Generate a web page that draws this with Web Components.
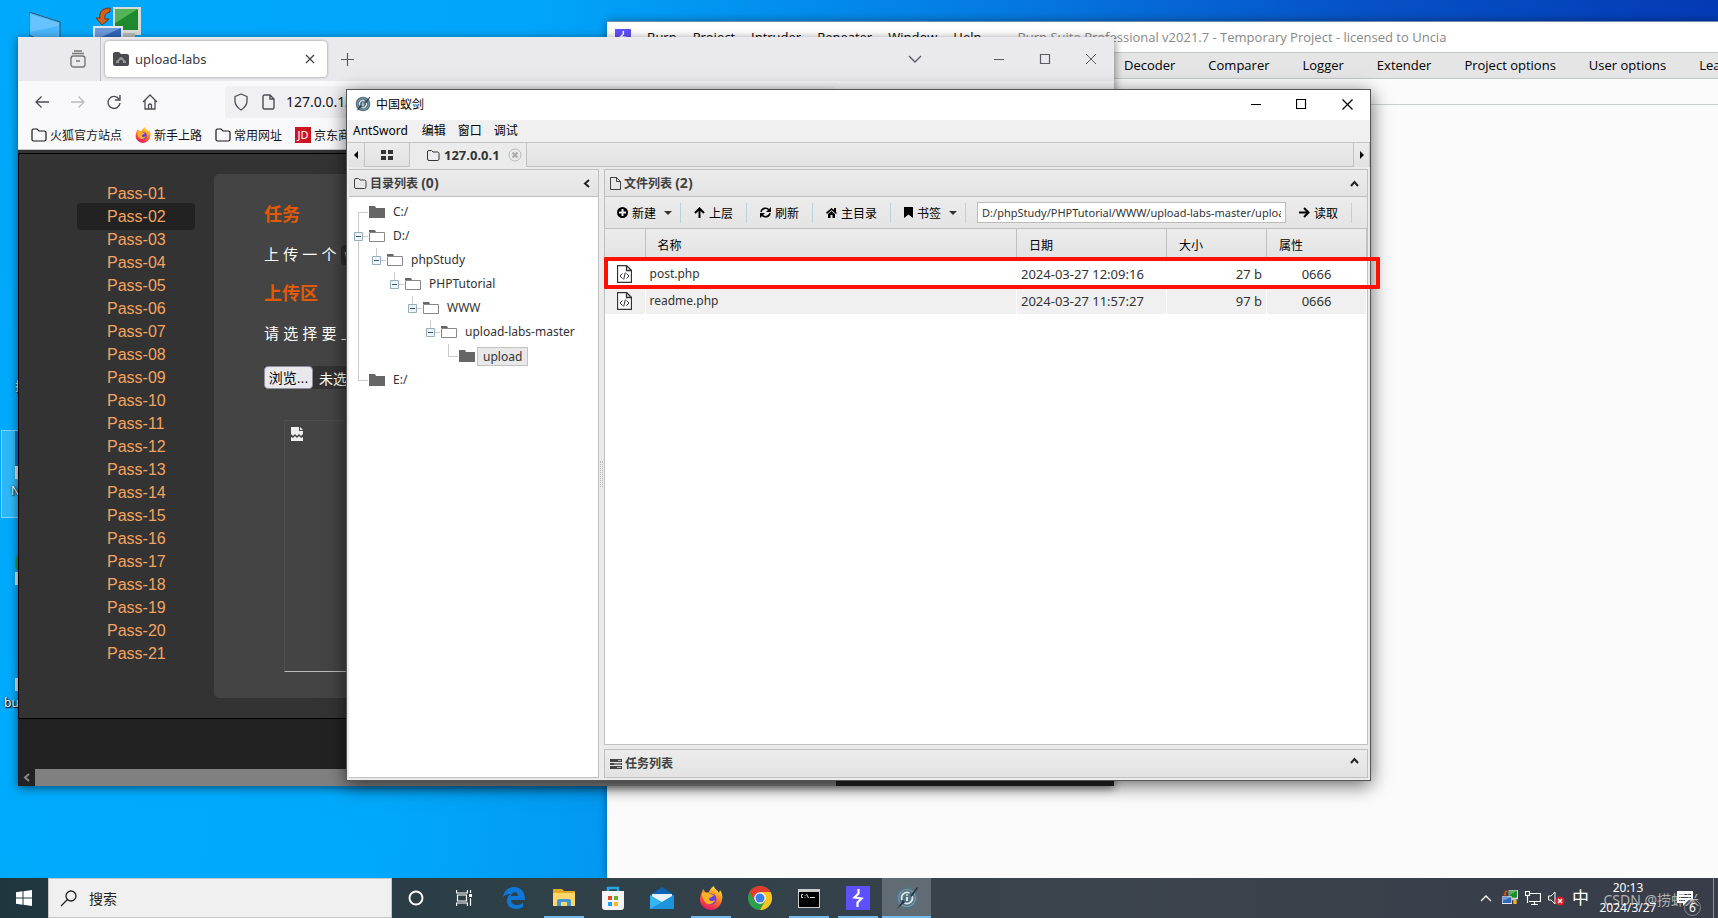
<!DOCTYPE html>
<html lang="zh-CN">
<head>
<meta charset="utf-8">
<title>桌面</title>
<style>
html,body{margin:0;height:100%;overflow:hidden}
body{font-family:"Noto Sans","Noto Sans CJK SC",sans-serif;font-size:12px;color:#000}
</style>
</head>
<body>
<desk-top>
  <desk-icons slot="icons"></desk-icons>
  <burp-window slot="windows"></burp-window>
  <browser-window slot="windows"><labs-page></labs-page></browser-window>
  <sword-window slot="windows"><dir-tree slot="side"></dir-tree><file-grid slot="main"></file-grid></sword-window>
  <task-bar slot="bar"></task-bar>
</desk-top>
<script>
const base = `:host,*{box-sizing:border-box}button{font:inherit;color:inherit;background:none;border:0;padding:0;margin:0}svg{display:block;flex:none}a{color:inherit;text-decoration:none}`;
function define(name, css, html) {
  const t = document.createElement('template');
  t.innerHTML = `<style>${base}${css}</style>${html}`;
  customElements.define(name, class extends HTMLElement {
    constructor() { super(); this.attachShadow({ mode: 'open' }).append(t.content.cloneNode(true)); }
  });
}
const svg = (w, h, body, attrs = '') => `<svg width="${w}" height="${h}" viewBox="0 0 ${w} ${h}" ${attrs}>${body}</svg>`;
const line = 'fill="none" stroke="currentColor"';

const foxLogo = s => `<svg width="${s}" height="${s}" viewBox="0 0 24 24"><defs><linearGradient id="fx" x1=".8" y1="0" x2=".3" y2="1"><stop offset="0" stop-color="#fff44f"/><stop offset=".35" stop-color="#ff9a1f"/><stop offset=".7" stop-color="#ff4a3c"/><stop offset="1" stop-color="#e0156c"/></linearGradient></defs><path fill="url(#fx)" d="M3 6l1-3 3 4 3-1c1-3 3-5 5-6 0 3 4 4 5 7l1-3c2 3 3 6 2 10-1 6-6 10-11 10S1 20 1 14c0-3 .6-6 2-8z"/><circle cx="12" cy="13" r="5.5" fill="#6b3ee0"/><path fill="#ffb224" d="M3 7c3-1 7 0 8 1l4 1c-1 2-4 2-5 4 0 2 3 3 6 1-1 4-7 6-10 2-2-2-3-5-3-9z"/></svg>`;
const swordLogo = s => `<svg width="${s}" height="${s}" viewBox="0 0 24 24"><circle cx="12" cy="12" r="11" fill="#567383"/><circle cx="12" cy="12" r="8.5" fill="none" stroke="#7d99a7" stroke-width="1.2"/><path d="M14.500 7A5.500 5.500 0 0 0 7 14M9.500 17A5.500 5.500 0 0 0 17 10" fill="none" stroke="#dfe9ee" stroke-width="1.800"/><path d="M12 11v4M12 8.500v1.200" stroke="#eef4f7" stroke-width="1.800"/><path d="M2 23l6-9 2 2zM15.500 9.500L22 1l1 1-6.500 9z" fill="#27353d"/></svg>`;
const burpLogo = s => `<svg width="${s}" height="${s}" viewBox="0 0 24 24"><path d="M0 0h24v24H0z" fill="#5f50ff"/><path d="M12.500 3v4.500L8.500 11.500l7 1-4 4V21" fill="none" stroke="#fff" stroke-width="2.200"/></svg>`;
const twoScreens = (w) => `<svg width="${w}" height="${w}" viewBox="0 0 48 48"><path d="M20 0h28v28H20z" fill="#d8dcd8"/><path d="M22 2h23v21H22z" fill="#1e8a2e"/><path d="M22 2h23L22 16z" fill="#55b35a"/><path d="M30 26h12v5H30z" fill="#b9bdb9"/><path d="M0 19h30v23H0z" fill="#e3e8ee"/><path d="M2 21h26v18H2z" fill="#2f66b8"/><path d="M2 21h26L2 33z" fill="#6d9add"/><path d="M17 1c-8 0-11 4-10 10H3l6 7 7-6h-4c-1-4 1-6 5-7z" fill="#d0621c" stroke="#7c3208"/><path d="M34 30h10v12H34z" fill="#f0b030"/></svg>`;

define('desk-top', `
:host{display:flex;flex-direction:column;height:100vh;position:relative;overflow:hidden}
.area{flex:1;position:relative;min-height:0;overflow:hidden;background:linear-gradient(#00000000,#00b4ff33),linear-gradient(100deg,#00a9fb 0,#00a6fa 28%,#0292ee 40%,#0577de 55%,#0653c6 72%,#043ab4 92%)}
`, `<div class="area"><slot name="icons"></slot><slot name="windows"></slot></div><slot name="bar"></slot>`);

define('desk-icons', `
:host{position:absolute;inset:0;color:#fff;font-size:12px;text-shadow:1px 1px 1px #000,0 0 2px #000}
.i{position:absolute}.sel{left:1px;top:430px;width:60px;height:88px;background:#2eb8f8;border:1px solid #7fd2fb}
.sel i{position:absolute;left:13px;top:0;width:20px;height:36px;background:#0e72c8}
.doc{left:15px;width:10px;height:13px;background:#dfe6ea}
`, `<div class="i" style="left:29px;top:12px">${svg(32, 28, '<path d="M0 0l31 10v28L0 23z" fill="#4ab6fb" stroke="#38526b"/><path d="M1 2l29 9v3L1 20z" fill="#7ccbff" opacity=".6"/>')}</div>
<div class="i" style="left:93px;top:7px">${twoScreens(48)}</div>
<div class="i" style="left:15px;top:377px">控</div>
<div class="i sel"><i></i></div><div class="i doc" style="top:466px"></div><div class="i" style="left:11px;top:482px">N</div>
<div class="i" style="left:15px;top:548px;width:30px;height:30px;border-radius:50%;background:#2e9a4c"></div><div class="i doc" style="top:572px"></div>
<div class="i doc" style="top:678px"></div><div class="i" style="left:4px;top:694px">bu</div>`);

define('burp-window', `
:host{position:absolute;left:607px;top:21px;right:0;bottom:0;background:#fbfbfb;border-top:1px solid #6d8bb0;box-shadow:0 0 8px #0006;font-family:"Open Sans","Noto Sans",sans-serif;font-size:13px}
header{height:30px;background:#fff;display:flex;align-items:center;padding-left:8px;white-space:nowrap;overflow:hidden}
header svg{margin-right:8px}
nav.m{display:flex}nav.m button{padding:0 8px;font-size:13px}
h1{font:inherit;color:#888;margin:0 0 0 28px;font-size:13px}
nav.t{height:27px;background:#e5e5e5;border:1px solid #c3c9c9;border-width:1px 0;display:flex;padding-left:501px;overflow:hidden;white-space:nowrap}
nav.t button{padding:0 17px 2px 16px;flex:none}
hr{border:0;border-top:1px solid #c9d0d0;margin:25px 0 0}
`, `<header>${burpLogo(16)}<nav class="m"><button>Burp</button><button>Project</button><button>Intruder</button><button>Repeater</button><button>Window</button><button>Help</button></nav><h1>Burp Suite Professional v2021.7 - Temporary Project - licensed to Uncia</h1></header>
<nav class="t"><button>Decoder</button><button>Comparer</button><button>Logger</button><button>Extender</button><button>Project options</button><button>User options</button><button>Learn</button></nav><hr>`);

const fold = svg(16, 14, `<path d="M1 11.500V2.500Q1 1 2.500 1H6l2 2h5.500Q15 3 15 4.500v7Q15 13 13.500 13h-11Q1 13 1 11.500z" ${line} stroke-width="1.200"/>`);
define('browser-window', `
:host{position:absolute;left:18px;top:37px;width:1096px;height:749px;display:flex;flex-direction:column;background:#f9f9fb;box-shadow:0 2px 9px #0008;color:#15141a}
.tabs{height:44px;background:#eaeaee;display:flex;align-items:center;color:#5b5b66}
.view{width:83px;height:44px;border-right:1px solid #bdbdc4;display:flex;justify-content:flex-end;align-items:center;padding-right:14px;color:#777}
.tab{width:222px;height:36px;margin-left:4px;background:#fff;border-radius:4px;box-shadow:0 0 3px #0006;display:flex;align-items:center;padding:0 12px 0 8px;color:#3a3944;font-size:13px}
.tab span{flex:1;margin-left:6px}
.new{margin-left:14px}
.ctl{margin-left:auto;display:flex;align-items:center;padding-right:17px}
.nav{height:37px;display:flex;align-items:center;padding-top:4px;padding-left:16px;color:#4d4c57}
.nav button{width:18px;margin-right:18px}
.url{margin-left:47px;width:610px;height:32px;background:#f0f0f4;border-radius:4px;display:flex;align-items:center;padding-left:8px}
.url input{border:0;background:none;font:14px "Noto Sans",sans-serif;margin-left:11px;flex:1;padding:0;color:#15141a}
.ext{margin-left:211px;width:20px;height:20px;background:#1f9a2a;border-radius:2px}
.marks{height:32px;border-bottom:1px solid #c4c4ca;display:flex;align-items:center;padding:2px 0 0 13px;white-space:nowrap;font-size:12px}
.marks a{display:flex;align-items:center;gap:3px;margin-right:13px}
.jd{width:16px;height:16px;background:#cf1421;color:#fff;font-size:11px;line-height:16px;text-align:center}
`, `<div class="tabs"><div class="view">${svg(16, 18, `<rect x="1" y="6" width="14" height="11" rx="2.500" ${line} stroke-width="1.400"/><path d="M2 3.500h12M4 1h8M6 11h4" ${line} stroke-width="1.400"/>`)}</div>
<div class="tab">${svg(16, 14, '<path d="M0 2q0-2 2-2h4l2 2h6q2 0 2 2v8q0 2-2 2H2q-2 0-2-2z" fill="#4a4b50"/><path d="M3 11q0-3 2-3 1-3 3-3t3 3q2 0 2 3h-3V9L8 7.500 6 9v2z" fill="#97989b"/>')}<span>upload-labs</span><button aria-label="关闭标签">${svg(10, 10, `<path d="M1 1l8 8M9 1L1 9" ${line} stroke-width="1.100"/>`)}</button></div>
<button class="new" aria-label="新标签">${svg(13, 13, `<path d="M6.500 0v13M0 6.500h13" ${line} stroke-width="1.200"/>`)}</button>
<div class="ctl">${svg(14, 8, `<path d="M1 1l6 6 6-6" ${line} stroke-width="1.400"/>`)}<span style="width:71px"></span>${svg(12, 12, `<path d="M1 6.500h10" ${line}/>`)}<span style="width:34px"></span>${svg(12, 12, `<path d="M1.500 1.500h9v9h-9z" ${line} stroke-width="1.200"/>`)}<span style="width:34px"></span>${svg(12, 12, `<path d="M1 1l10 10M11 1L1 11" ${line}/>`)}</div></div>
<div class="nav"><button aria-label="后退">${svg(16, 16, `<path d="M15 8H2M7.500 2.500L2 8l5.500 5.500" ${line} stroke-width="1.300"/>`)}</button><button aria-label="前进" style="color:#bbb">${svg(16, 16, `<path d="M1 8h13M8.500 2.500L14 8l-5.500 5.500" ${line} stroke-width="1.300"/>`)}</button><button aria-label="刷新">${svg(16, 16, `<path d="M13 5A6 6 0 1 0 14 9M14 1v5H9" ${line} stroke-width="1.400"/>`)}</button><button aria-label="主页">${svg(16, 16, `<path d="M1 8l7-7 7 7M3 6.500V15h10V6.500M6.500 15v-4q1.500-2 3 0v4" ${line} stroke-width="1.300"/>`)}</button>
<div class="url">${svg(16, 18, `<path d="M8 1l6 2.500V8q0 5-6 9-6-4-6-9V3.500z" ${line} stroke-width="1.300" stroke-linejoin="round"/>`)}<span style="width:13px"></span>${svg(13, 16, `<path d="M1 13.500V2.500Q1 1 2.500 1H8l4 4v8.500Q12 15 10.500 15h-8Q1 15 1 13.500zM8 1v4h4" ${line} stroke-width="1.400"/>`)}<input aria-label="地址" value="127.0.0.1/upload-labs-master/Pass-02/index.php"></div><i class="ext"></i></div>
<div class="marks"><a href="#">${fold}火狐官方站点</a><a href="#">${foxLogo(16)}新手上路</a><a href="#">${fold}常用网址</a><a href="#"><span class="jd">JD</span>京东商城</a></div>
<slot></slot>`);

const passes = Array.from({ length: 21 }, (_, i) => `<li${i === 1 ? ' class="on"' : ''}><a href="#">Pass-${String(i + 1).padStart(2, '0')}</a></li>`).join('');
define('labs-page', `
:host{flex:1;display:flex;flex-direction:column;background:linear-gradient(#333 3px,#222 3px);font-family:"Liberation Sans","Noto Sans CJK SC",sans-serif;color:#fff;overflow:hidden}
.body{margin-top:3px;border:1px solid #000;background:#333;display:flex;height:566px;padding:20px 0;align-items:flex-start}
ul{list-style:none;margin:8px 0 0 58px;padding:0;width:118px;font-size:16px;line-height:23px;color:#f4a460}
li{height:23px;padding-left:30px}
li.on{background:#222;border-radius:4px;height:27px;line-height:23px;margin:-2px 0;padding-top:2px}
main{margin-left:19px;flex:1;height:524px;background:#444;border-radius:5px 0 0 5px;padding:28px 50px}
h3{font-size:18px;line-height:26px;margin:0;color:#e35a04}
p{margin:15px 0 14px;font-size:15px;line-height:24px}
p code{background:#2c2c2c;border-radius:4px;padding:2px 4px;color:#b5cf3a;font-size:14px}
.f{display:flex;align-items:center;background:#333;width:400px;height:23px;margin-top:20px;font-size:14px;gap:6px}
.f button{background:#e9e9ed;border:1px solid #8f8f9d;border-radius:4px;color:#000;width:49px;height:23px;line-height:20px}
.img{margin:31px 0 0 20px;height:252px;border:1px solid #4d4d4d;border-bottom-color:#bbb;padding:6px}
.bar{margin-top:auto;height:17px;display:flex;background:#222}
.bar span{width:17px;display:flex;align-items:center;justify-content:center;color:#888}
.bar i{width:801px;background:#808080}
`, `<div class="body"><ul>${passes}</ul><main><h3>任务</h3><p>上 传 一 个 <code>webshell</code> 到 服 务 器 。</p><h3>上传区</h3><p>请 选 择 要 上 传 的 图 片 ：</p><div class="f"><button>浏览...</button><span>未选择文件。</span></div><div class="img">${svg(12, 14, '<path d="M0 0h8v4h4v3l-2 2-2-2-2 2-2-2-2 2-2-2zM0 10l2 1 2-2 2 2 2-2 2 2 2-1v4H0z" fill="#eee"/><path d="M9 0l3 3H9z" fill="#eee"/>')}</div></main></div>
<div class="bar"><span>${svg(7, 9, `<path d="M6 1L2 4.500 6 8" ${line} stroke-width="2"/>`)}</span><i></i></div>`);

const f12 = svg(13, 11, `<path d="M.5 9V2q0-1.500 1.500-1.500h2.500L6 2h4.500Q12 2 12 3.500V9q0 1.500-1.500 1.500H2Q.5 10.500.5 9z" ${line}/>`);
define('sword-window', `
:host{position:absolute;left:346px;top:89px;width:1025px;height:692px;display:flex;flex-direction:column;background:#ebebeb;border:1px solid #555;box-shadow:0 4px 18px #0009;color:#000}
header{height:30px;background:#fff;display:flex;align-items:center;padding:0 17px 2px 8px}
header h2{font:inherit;margin:0 auto 0 5px}
header button{margin-left:35px}
.menu{height:22px;background:#f0f0f0;display:flex;gap:12px;padding-left:6px;align-items:center}
.menu button{line-height:20px}.menu button:first-child{margin-right:2px}
.strip{height:27px;display:flex;padding-left:2px;border-top:1px solid #c3c3c3;background:#ebebeb}
.strip>*{height:24px;border-right:1px solid #c3c3c3;display:flex;align-items:center;background:linear-gradient(#ececec,#e2e2e2)}
.strip .c{width:16px;justify-content:center}.strip .h{width:45px;justify-content:center;border-bottom:1px solid #c3c3c3}
.strip .on{width:117px;padding-left:17px;gap:4px;font-weight:bold;color:#333;font-size:13px;background:#ebebeb}
.strip .on button{margin-left:4px}.strip .fill{flex:1;border-bottom:1px solid #c3c3c3}
.cols{flex:1;display:flex;min-height:0;padding:0 2px 2px 2px}
.side{width:250px;border:1px solid #c0c0c0;border-left:0;background:#fff;display:flex;flex-direction:column}
.split{width:5px;display:flex;align-items:center;justify-content:center}.split i{width:3px;height:26px;border:1px dotted #bbb}
.right{flex:1;display:flex;flex-direction:column;min-width:0;gap:4px}
.panel{border:1px solid #c0c0c0;background:#fff;display:flex;flex-direction:column}
.panel.g{flex:1;min-height:0}
.hd{height:27px;flex:none;background:linear-gradient(#ececec,#e3e3e3);border-bottom:1px solid #c0c0c0;display:flex;align-items:center;padding:0 8px 0 5px;gap:3px;font-weight:bold;color:#404040;line-height:20px}
.hd span{flex:1}.hd big{font-size:14px}.hd button{color:#222}.foot{border-bottom:0}
`, `<header>${swordLogo(16)}<h2>中国蚁剑</h2><button aria-label="最小化">${svg(10, 10, `<path d="M0 5.500h10" ${line}/>`)}</button><button aria-label="最大化">${svg(11, 11, `<path d="M.5.5h9v9h-9z" ${line} stroke-width="1.200"/>`)}</button><button aria-label="关闭">${svg(11, 11, `<path d="M.5.5l10 10M10.500.5l-10 10" ${line} stroke-width="1.200"/>`)}</button></header>
<nav class="menu"><button>AntSword</button><button>编辑</button><button>窗口</button><button>调试</button></nav>
<div class="strip"><button class="c" aria-label="左">${svg(5, 8, '<path d="M4 0v8L0 4z"/>')}</button><button class="h" aria-label="主页">${svg(12, 10, '<path d="M0 0h5v4H0zM7 0h5v4H7zM0 6h5v4H0zM7 6h5v4H7z" fill="#333"/>')}</button><div class="on">${f12}127.0.0.1<button aria-label="关闭标签">${svg(14, 14, '<circle cx="7" cy="7" r="6" fill="none" stroke="#bbb"/><path d="M4.500 4.500l5 5M9.500 4.500l-5 5" stroke="#aaa" stroke-width="2"/>')}</button></div><div class="fill"></div><button class="c" aria-label="右">${svg(5, 8, '<path d="M1 0v8l4-4z"/>')}</button></div>
<div class="cols"><section class="side"><div class="hd">${f12}<span>目录列表 <big>(0)</big></span><button aria-label="折叠">${svg(7, 9, `<path d="M6 1L2 4.500 6 8" ${line} stroke-width="2"/>`)}</button></div><slot name="side"></slot></section><div class="split"><i></i></div>
<div class="right"><section class="panel g"><div class="hd">${svg(11, 13, `<path d="M.5.5h6l4 4v8H.5zM6.500.5v4h4" ${line}/>`)}<span>文件列表 <big>(2)</big></span><button aria-label="折叠">${svg(9, 7, `<path d="M1 6l3.500-4L8 6" ${line} stroke-width="2"/>`)}</button></div><slot name="main"></slot></section>
<section class="panel"><div class="hd foot">${svg(12, 10, '<path d="M0 0h12v3H0zM0 4h12v2H0zM0 7h12v3H0z" fill="#444"/><path d="M8 1h3v1H8zM4 4.500h7v1H4zM7 8h4v1H7z" fill="#bbb"/>')}<span>任务列表</span><button aria-label="展开">${svg(9, 13, `<path d="M1 6l3.500-4L8 6" ${line} stroke-width="2"/>`)}</button></div></section></div></div>`);

const closed = svg(16, 12, '<path d="M0 0h6l1 2h9v10H0z" fill="#666"/>');
const open = svg(16, 12, '<path d="M0 0h6l1 2H0z" fill="#666"/><path d="M.5 2.500h15v9H.5z" fill="#fff" stroke="#888"/>');
const minus = `<svg class="e" width="9" height="9" viewBox="0 0 9 9"><path d="M.5.5h8v8h-8z" fill="#eef6fa" stroke="#93afbd"/><path d="M2 4.500h5" stroke="#35586b"/></svg>`;
const nodes = [['C:/', 0, 0], ['D:/', 0, 1], ['phpStudy', 1, 1], ['PHPTutorial', 2, 1], ['WWW', 3, 1], ['upload-labs-master', 4, 1], ['upload', 5, 0, 1], ['E:/', 0, 0]];
define('dir-tree', `
:host{display:block;font-size:12px;color:#333;position:relative}
ul{list-style:none;margin:0;padding:3px 0 0}
li{height:24px;display:flex;align-items:center;padding-left:calc(5px + var(--d) * 18px)}
.x{width:15px;height:24px;position:relative;display:flex;align-items:center;flex:none}
.x:before{content:"";position:absolute;left:4px;top:0;height:12px;border-left:1px solid #ccc}
.x:after{content:"";position:absolute;left:4px;right:1px;top:12px;border-top:1px solid #ccc}
.x svg{position:relative;z-index:1}
.first .x:before{top:12px;height:24px}.last .x:before{top:-144px;height:156px}
span{margin-left:3px;padding:0 5px;line-height:18px}
.sel span{background:#e8e8e8;border:1px solid #c3c3c3;line-height:17px;margin-left:2px}
`, `<ul>${nodes.map(([n, d, o, s], i) => `<li style="--d:${d}" class="${i ? '' : 'first'} ${i === 7 ? 'last' : ''} ${s ? 'sel' : ''}"><div class="x">${o ? minus : ''}</div>${o ? open : closed}<span>${n}</span></li>`).join('')}</ul>`);

const codeDoc = svg(15, 18, '<path d="M.5.5h9l5 5v12H.5zM9.500.5v5h5" fill="#fff" stroke="#333" stroke-width="1.300"/><path d="M5.500 8.500L3 11l2.500 2.500M9.500 8.500L12 11l-2.500 2.500M8.300 7.500l-1.600 7" fill="none" stroke="#333"/>');
define('file-grid', `
:host{display:block;color:#333;font-size:13px;position:relative}
.bar{height:32px;background:linear-gradient(#ececec,#e4e4e4);border-bottom:1px solid #c0c0c0;display:flex;align-items:center;font-size:12px;color:#000;padding-right:15px}
.bar button{display:flex;align-items:center;gap:4px;height:20px;padding:0 13px;border-right:1px solid #b9d3dc;white-space:nowrap;flex:none}
.bar .dd{padding-right:8px}.bar button:first-child{padding-left:12px}
.bar input{flex:1;min-width:60px;height:21px;border:1px solid #bbb;background:#fff;margin-left:11px;padding:0 4px;font:11px "Noto Sans",sans-serif;color:#333}
.bar .c{margin-left:4px}
table{border-collapse:collapse;table-layout:fixed;width:100%}
th{height:29px;background:linear-gradient(#ececec,#e3e3e3);border-right:1px solid #c0c0c0;border-bottom:0;text-align:left;font-weight:normal;font-size:12px;color:#000;padding:2px 0 0 12px}
td{height:27px;padding:0 4px;border-right:1px solid #fff}
tbody tr:first-child td{height:29px;padding-top:2px}
td:nth-child(1){padding-left:12px}td:nth-child(2){font-size:12px}td:nth-child(4){text-align:right}td:nth-child(5){text-align:center}
tr:nth-child(2) td{background:#f0f0f0}
.mark{position:absolute;left:-1px;top:60px;right:-13px;height:32px;border:4px solid #f10;border-radius:1px}
`, `<div class="bar"><button class="dd">${svg(11, 11, '<circle cx="5.500" cy="5.500" r="5.500"/><path d="M5.500 2v7M2 5.500h7" stroke="#eee" stroke-width="2"/>')}新建${svg(8, 4, '<path d="M0 0h8L4 4z" fill="#333"/>', 'class="c"')}</button>
<button>${svg(11, 11, '<path d="M5.500 11V2M1 6l4.500-4.500L10 6" fill="none" stroke="#000" stroke-width="2"/>')}上层</button>
<button>${svg(11, 11, '<path d="M1 5a4.500 4.500 0 0 1 8-2M10 6a4.500 4.500 0 0 1-8 2" fill="none" stroke="#000" stroke-width="1.600"/><path d="M11 0v5H6zM0 11V6h5z"/>')}刷新</button>
<button>${svg(11, 11, '<path d="M0 5.500L5.500 1 8 3V1h2v4l1 1-1 1-4.500-4L1 7zM2 7l3.500-3L9 7v4H6.500V8h-2v3H2z"/>')}主目录</button>
<button class="dd">${svg(9, 11, '<path d="M0 0h9v11L4.500 7.500 0 11z"/>')}书签${svg(8, 4, '<path d="M0 0h8L4 4z" fill="#333"/>', 'class="c"')}</button>
<input aria-label="路径" value="D:/phpStudy/PHPTutorial/WWW/upload-labs-master/upload/">
<button>${svg(11, 11, '<path d="M0 5.500h9M5 1l4.500 4.500L5 10" fill="none" stroke="#000" stroke-width="2"/>')}读取</button></div>
<table><colgroup><col style="width:40px"><col><col style="width:150px"><col style="width:100px"><col style="width:100px"></colgroup>
<thead><tr><th></th><th>名称</th><th>日期</th><th>大小</th><th>属性</th></tr></thead>
<tbody><tr><td>${codeDoc}</td><td>post.php</td><td>2024-03-27 12:09:16</td><td>27 b</td><td>0666</td></tr><tr><td>${codeDoc}</td><td>readme.php</td><td>2024-03-27 11:57:27</td><td>97 b</td><td>0666</td></tr></tbody></table><div class="mark"></div>`);

const app = (label, icon, cls = '') => `<button class="a ${cls}" aria-label="${label}">${icon}</button>`;
define('task-bar', `
:host{height:40px;flex:none;display:flex;align-items:center;position:relative;color:#fff;background:linear-gradient(90deg,#20363f,#304149 35%,#3b434c 65%,#383d49)}
.start{width:48px;height:40px;display:flex;justify-content:center;align-items:center}
.search{width:344px;height:40px;background:#f0f0f0;border:1px solid #c4c4c4;display:flex;align-items:center;padding-left:11px;color:#222}
.search input{border:0;background:none;font:14px "Noto Sans CJK SC",sans-serif;padding:0;margin-left:12px;flex:1;min-width:0}
.search input::placeholder{color:#222;opacity:1}
.a{width:49px;height:40px;display:flex;align-items:center;justify-content:center;flex:none;position:relative}
.a.n{width:48px}.a.w{width:51px}
.run:after{content:"";position:absolute;left:5px;right:4px;bottom:0;height:2px;background:#76b9ed}
.on{background:#616b74}.on:after{left:0;right:0}
.tray{margin-left:auto;display:flex;align-items:center;padding-right:25px;gap:7px}
.up{margin-right:3px}
.clock{font:12px/20px "Noto Sans",sans-serif;text-align:center;width:62px;margin:0 11px 0 1px}
.zh{font-size:17px;line-height:20px}
.note{position:relative}.note b{position:absolute;left:7px;top:8px;width:17px;height:17px;border-radius:50%;background:#383d49;border:1px solid #888;font:12px/15px "Noto Sans",sans-serif;text-align:center}
.wm{position:absolute;right:19px;top:12px;font-size:14px;line-height:20px;color:#ffffff99;white-space:nowrap}
.end{position:absolute;right:4px;top:0;bottom:0;border-left:1px solid #8a8f96}
`, `<button class="start" aria-label="开始">${svg(16, 16, '<path d="M0 2.200L6.500 1.300v6.200H0zM7.500 1.200L16 0v7.500H7.500zM0 8.500h6.500v6.200L0 13.800zM7.500 8.500H16V16l-8.500-1.200z" fill="#fff"/>')}</button>
<div class="search">${svg(17, 17, `<circle cx="11" cy="6" r="5" ${line} stroke-width="1.300"/><path d="M7.500 9.500L1 16" ${line} stroke-width="1.300"/>`)}<input placeholder="搜索" aria-label="搜索"></div>
${app('Cortana', svg(16, 16, `<circle cx="8" cy="8" r="6.500" ${line} stroke-width="2"/>`), 'n')}
${app('任务视图', svg(16, 16, `<path d="M.6 0v3h10.800V0M1.500 5h9v6h-9zM.6 16v-3h10.800v3M14.500 0v3M14.500 8v8" ${line} stroke-width="1.200"/><path d="M13 4h3v3h-3z" fill="#fff"/>`), 'n')}
${app('Edge', svg(22, 22, '<path d="M0 10C1 3 6 0 11 0c7 0 11 5 11 13H8c0 6 8 6 12 3v4c-6 4-16 2-16-6 0-4 2-6 4-7-5 0-7 2-8 3zM8 9h7c0-5-6-5-7 0z" fill="#0f78d6"/>'), 'w')}
${app('资源管理器', svg(22, 20, '<path d="M0 1h9l2 2h11v15H0z" fill="#e5a923"/><path d="M0 5h22v13H0z" fill="#ffd768"/><path d="M4 18v-5q0-2 2-2h10q2 0 2 2v5h-4v-4H8v4z" fill="#3f97d8"/>'), 'run')}
${app('应用商店', svg(24, 24, '<path d="M7 6V2h10v4" fill="none" stroke="#22a6e8" stroke-width="2.500"/><path d="M1 5h22v16q0 3-3 3H4q-3 0-3-3z" fill="#f4f4f4"/><path d="M7 10h4v4H7z" fill="#e5482d"/><path d="M13 10h4v4h-4z" fill="#6cae2b"/><path d="M7 16h4v4H7z" fill="#1da1e8"/><path d="M13 16h4v4h-4z" fill="#f6b91c"/>'))}
${app('邮件', svg(24, 22, '<path d="M0 8l12-8 12 8v14H0z" fill="#0e62b8"/><path d="M2 7h20v7l-10 4L2 14z" fill="#e8f2f8"/><path d="M0 8l12 7 12-7v14H0z" fill="#38b4f0"/><path d="M0 22L24 8v14z" fill="#1c93dc"/>'))}
${app('Firefox', foxLogo(24), 'run')}
${app('Chrome', svg(24, 24, '<circle cx="12" cy="12" r="12" fill="#2da04e"/><path d="M1.600 6A12 12 0 0 1 22.400 6H12l-5.200 9z" fill="#e33b2e"/><path d="M22.400 6A12 12 0 0 1 12 24l5.200-9L12 6z" fill="#fcc31e"/><circle cx="12" cy="12" r="5.800" fill="#fff"/><circle cx="12" cy="12" r="4.500" fill="#3b7ded"/>'))}
${app('命令提示符', svg(22, 19, '<path d="M0 0h22v19H0z" fill="#ccc"/><path d="M1 3h20v15H1z" fill="#000"/><path d="M5 5.500H3.500v3H5M7 6v.8M7 8v.8M8.500 5l2 4M12 8.500h5" fill="none" stroke="#ddd"/>'), 'run')}
${app('Burp', burpLogo(24), 'run')}
${app('AntSword', swordLogo(24), 'run on')}
<div class="tray">${svg(12, 7, `<path d="M1 6l5-5 5 5" ${line} stroke-width="1.400"/>`, 'class="up"')}${twoScreens(16)}${svg(16, 14, `<path d="M4 2.500h11.500v8H4M9.500 11v2.500M6 13.500h7M.5.500h4v4h-4zM2.500 5v7" ${line} stroke-width="1.200"/>`)}${svg(17, 15, `<path d="M.5 5h2.500l4-4v12l-4-4H.5z" ${line}/><circle cx="12" cy="10" r="4.500" fill="#d9202a"/><path d="M10 8l4 4M14 8l-4 4" stroke="#fff" stroke-width="1.300"/>`)}<span class="zh">中</span><div class="clock">20:13<br>2024/3/27</div><div class="note">${svg(16, 15, '<path d="M0 0h16v12H9l-3 3v-3H0z" fill="#fff"/><path d="M2 3.500h12M2 6.500h12M2 9.500h6" stroke="#383d49"/>')}<b>6</b></div></div>
<span class="wm">CSDN @捞虾米</span><i class="end"></i>`);
</script>
</body>
</html>
